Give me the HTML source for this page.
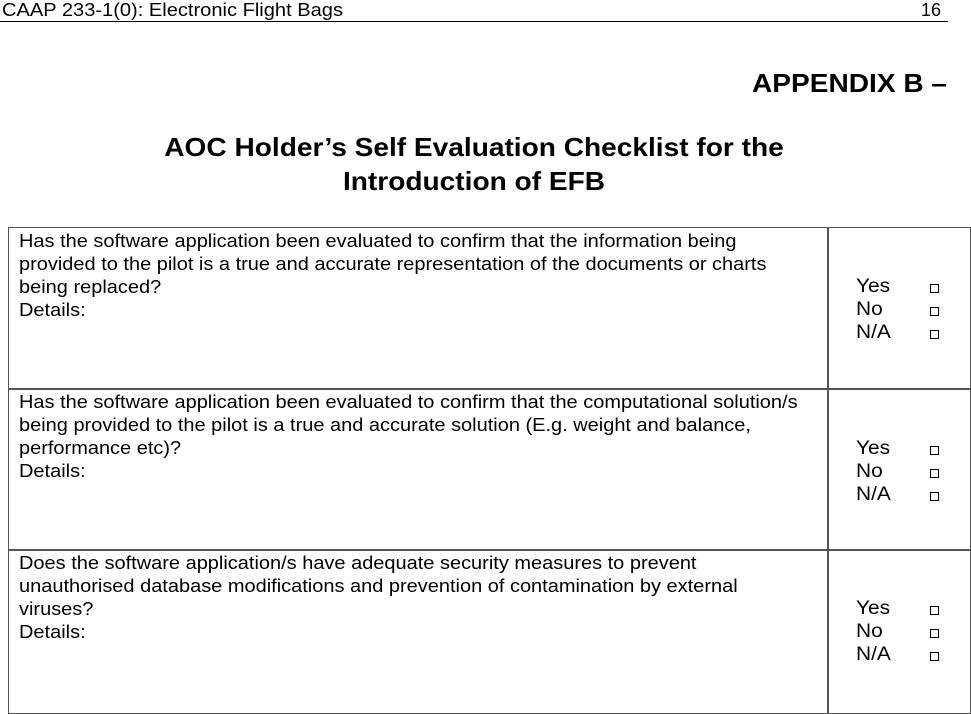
<!DOCTYPE html>
<html><head><meta charset="utf-8"><style>
body{margin:0;width:971px;height:714px;background:#fff;font-family:"Liberation Sans",sans-serif;color:#000;position:relative;overflow:hidden}
.a{position:absolute;white-space:nowrap}
.hd{font-size:18px;top:0px;transform:scaleX(1.115);transform-origin:left}
.rule{position:absolute;left:0;top:21px;width:948px;height:1px;background:#000}
.t1{font-weight:bold;font-size:26px;top:68px;left:752px;transform:scaleX(1.08);transform-origin:left}
.t2{font-weight:bold;font-size:26px;left:474px;text-align:center;line-height:34px;top:130px;transform:translateX(-50%) scaleX(1.08)}
.cell{position:absolute;border:1px solid #555;box-sizing:border-box}
.txt{position:absolute;left:19px;font-size:18px;line-height:23px;white-space:nowrap;transform:scaleX(1.11);transform-origin:left}
.opt{position:absolute;left:856px;font-size:19px;line-height:23px;transform:scaleX(1.1);transform-origin:left}
.bx{position:absolute;left:930px;width:7px;height:7px;border:1px solid #000}
</style></head><body>
<div class="a hd" style="left:2px">CAAP 233-1(0): Electronic Flight Bags</div>
<div class="a" style="font-size:18px;top:0;left:921px">16</div>
<div class="rule"></div>
<div class="a t1">APPENDIX B –</div>
<div class="a t2">AOC Holder’s Self Evaluation Checklist for the<br>Introduction of EFB</div>

<div class="cell" style="left:8px;top:227px;width:821px;height:163px"></div>
<div class="cell" style="left:827px;top:227px;width:144px;height:163px"></div>
<div class="cell" style="left:8px;top:388px;width:821px;height:163px"></div>
<div class="cell" style="left:827px;top:388px;width:144px;height:163px"></div>
<div class="cell" style="left:8px;top:549px;width:821px;height:165px"></div>
<div class="cell" style="left:827px;top:549px;width:144px;height:165px"></div>

<div class="txt" style="top:230px">Has the software application been evaluated to confirm that the information being<br>provided to the pilot is a true and accurate representation of the documents or charts<br>being replaced?<br>Details:</div>
<div class="txt" style="top:391px">Has the software application been evaluated to confirm that the computational solution/s<br>being provided to the pilot is a true and accurate solution (E.g. weight and balance,<br>performance etc)?<br>Details:</div>
<div class="txt" style="top:552px">Does the software application/s have adequate security measures to prevent<br>unauthorised database modifications and prevention of contamination by external<br>viruses?<br>Details:</div>

<div class="opt" style="top:275px">Yes<br>No<br>N/A</div>
<div class="bx" style="top:284px"></div><div class="bx" style="top:307px"></div><div class="bx" style="top:330px"></div>
<div class="opt" style="top:437px">Yes<br>No<br>N/A</div>
<div class="bx" style="top:446px"></div><div class="bx" style="top:469px"></div><div class="bx" style="top:492px"></div>
<div class="opt" style="top:597px">Yes<br>No<br>N/A</div>
<div class="bx" style="top:606px"></div><div class="bx" style="top:629px"></div><div class="bx" style="top:652px"></div>
</body></html>
